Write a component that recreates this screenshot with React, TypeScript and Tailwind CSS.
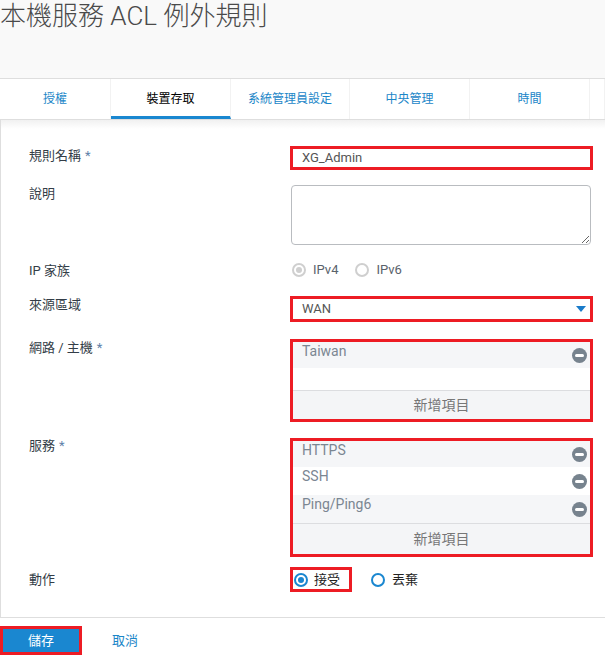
import React from 'react'

const font = { fontFamily: '"Roboto", "Noto Sans CJK TC", sans-serif' }

const tabs = [
  { label: '授權', w: 'w-[111px]' },
  { label: '裝置存取', w: 'w-[120px]', active: true },
  { label: '系統管理員設定', w: 'w-[119px]' },
  { label: '中央管理', w: 'w-[120px]' },
  { label: '時間', w: 'w-[120px]' },
  { label: '', w: 'flex-1' },
]

function Label({ text, required }: { text: string; required?: boolean }) {
  return (
    <div className="w-[261px] shrink-0 text-[13px] leading-[17px] text-[#333d47]">
      {text}
      {required && <span className="ml-1 text-[#5f82aa]">*</span>}
    </div>
  )
}

function MinusIcon() {
  return (
    <span className="flex h-[15px] w-[15px] items-center justify-center rounded-full bg-[#77838e]">
      <span className="h-[3px] w-[9px] rounded-full bg-white" />
    </span>
  )
}

function ItemRow({ text, gray, h }: { text: string; gray?: boolean; h: string }) {
  return (
    <div className={`flex ${h} items-center justify-between pl-[9px] pr-[3px] ${gray ? 'bg-[#f5f6f8]' : 'bg-white'}`}>
      <span className="self-start text-[14px] leading-[18px] text-[#7b8692]">{text}</span>
      <MinusIcon />
    </div>
  )
}

function AddRow({ h }: { h: string }) {
  return (
    <div className={`flex ${h} items-center justify-center border-t border-[#dcdde0] bg-[#f4f5f7] text-[14px] text-[#777]`}>
      新增項目
    </div>
  )
}

function Radio({ checked, disabled }: { checked?: boolean; disabled?: boolean }) {
  const ring = disabled ? 'border-[#cfcfcf]' : 'border-[#1a87d0]'
  const dot = disabled ? 'bg-[#cfcfcf]' : 'bg-[#1a87d0]'
  return (
    <span className={`flex h-[14px] w-[14px] items-center justify-center rounded-full border-2 ${ring} bg-white`}>
      {checked && <span className={`h-[6px] w-[6px] rounded-full ${dot}`} />}
    </span>
  )
}

export default function App() {
  return (
    <div className="h-[656px] w-[605px] overflow-hidden bg-white" style={font}>
      {/* Header */}
      <div className="h-[79px] border-b border-[#dedede] bg-[#f9f9f9]">
        <h1 className="pt-[1px] text-[26px] font-light leading-[30px] text-[#4a4a4a]">本機服務 ACL 例外規則</h1>
      </div>

      {/* Tabs */}
      <div className="flex h-[41px] border-b border-[#dedede] bg-white">
        {tabs.map((t, i) => (
          <div
            key={i}
            className={`${t.w} flex items-center justify-center border-r border-[#f2f2f2] text-[12px] ${
              t.active ? 'border-b-[3px] border-b-[#1a87d0] pt-[3px] text-black' : 'text-[#1a86c8]'
            }`}
          >
            {t.label}
          </div>
        ))}
      </div>

      {/* Form panel */}
      <div className="border-b border-l border-[#dedede] bg-[linear-gradient(#f1f1f1,#ffffff_9px)] pb-[25px] pl-[28px] pt-[26px]">
        {/* 規則名稱 */}
        <div className="flex">
          <div className="pt-[1px]">
            <Label text="規則名稱" required />
          </div>
          <div className="flex h-[24px] w-[303px] items-center border-[3px] border-[#ed1c24] bg-white pl-[9px] text-[13px] text-[#555]">
            XG_Admin
          </div>
        </div>

        {/* 說明 */}
        <div className="mt-[15px] flex">
          <Label text="說明" />
          <textarea className="ml-[1px] h-[60px] w-[300px] rounded-[4px] border border-[#b9bcc0] bg-white" />
        </div>

        {/* IP 家族 */}
        <div className="mt-[17px] flex h-[16px] items-center">
          <Label text="IP 家族" />
          <div className="flex items-center pl-[2px] text-[13px] text-[#5a626b]">
            <Radio checked disabled />
            <span className="ml-[7px]">IPv4</span>
            <span className="ml-[17px]">
              <Radio disabled />
            </span>
            <span className="ml-[7px]">IPv6</span>
          </div>
        </div>

        {/* 來源區域 */}
        <div className="mt-[18px] flex">
          <Label text="來源區域" />
          <div className="flex h-[26px] w-[303px] items-center justify-between border-[3px] border-[#ed1c24] bg-white pl-[9px] pr-[4px] text-[13px] text-[#555]">
            <span>WAN</span>
            <svg width="10" height="6" viewBox="0 0 10 6">
              <path d="M0 0h10L5 6z" fill="#1a7bc9" />
            </svg>
          </div>
        </div>

        {/* 網路 / 主機 */}
        <div className="mt-[17px] flex">
          <Label text="網路 / 主機" required />
          <div className="w-[303px] border-[3px] border-[#ed1c24] bg-white">
            <ItemRow text="Taiwan" gray h="h-[26px]" />
            <div className="h-[22px] bg-white" />
            <AddRow h="h-[29px]" />
          </div>
        </div>

        {/* 服務 */}
        <div className="mt-[16px] flex">
          <div className="-mt-[1px]">
            <Label text="服務" required />
          </div>
          <div className="w-[303px] border-[3px] border-[#ed1c24] bg-white">
            <ItemRow text="HTTPS" gray h="h-[26px]" />
            <ItemRow text="SSH" h="h-[28px]" />
            <ItemRow text="Ping/Ping6" gray h="h-[28px]" />
            <AddRow h="h-[31px]" />
          </div>
        </div>

        {/* 動作 */}
        <div className="mt-[10px] flex h-[25px] items-center">
          <Label text="動作" />
          <div className="flex items-center text-[13px] text-[#222]">
            <div className="flex h-[25px] w-[62px] items-center border-[3px] border-[#ed1c24] pl-[1px]">
              <Radio checked />
              <span className="ml-[6px]">接受</span>
            </div>
            <span className="ml-[19px]">
              <Radio />
            </span>
            <span className="ml-[7px]">丟棄</span>
          </div>
        </div>
      </div>

      {/* Buttons */}
      <div className="mt-[8px] flex items-center">
        <button className="h-[29px] w-[82px] border-[3px] border-[#ed1c24] bg-[#1a87d0] text-[13px] text-white">
          儲存
        </button>
        <button className="ml-[30px] text-[13px] text-[#1a86c8]">取消</button>
      </div>
    </div>
  )
}
